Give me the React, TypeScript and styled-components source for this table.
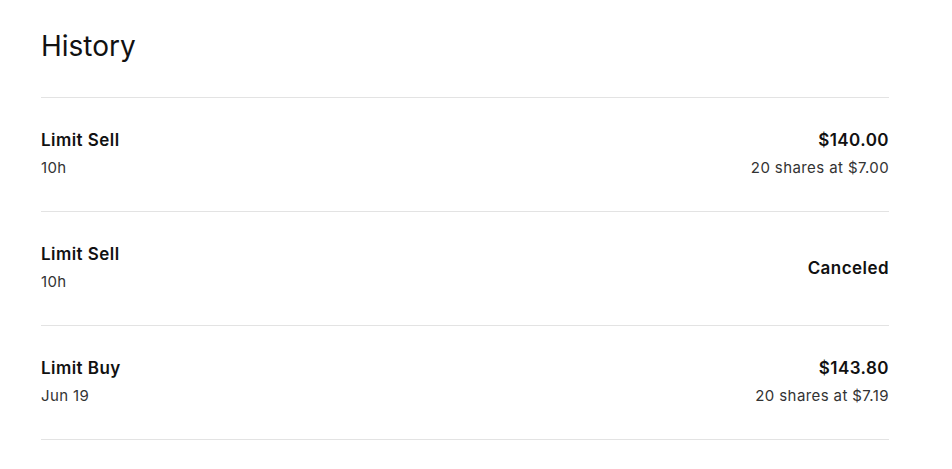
import React from "react";
import styled, { createGlobalStyle } from "styled-components";

interface Order {
    kind: string;
    when: string;
    amount: string;
    detail?: string;
}

const orders: Order[] = [
    { kind: "Limit Sell", when: "10h", amount: "$140.00", detail: "20 shares at $7.00" },
    { kind: "Limit Sell", when: "10h", amount: "Canceled" },
    { kind: "Limit Buy", when: "Jun 19", amount: "$143.80", detail: "20 shares at $7.19" },
];

const App = () => {
    return (
        <>
            <GlobalStyle />
            <StyledPage>
                <StyledTitle>History</StyledTitle>
                <StyledList>
                    {orders.map((order, i) => (
                        <StyledRow key={i}>
                            <StyledSide>
                                <StyledPrimary>{order.kind}</StyledPrimary>
                                <StyledSecondary>{order.when}</StyledSecondary>
                            </StyledSide>
                            <StyledSide $right>
                                <StyledPrimary>{order.amount}</StyledPrimary>
                                {order.detail && <StyledSecondary>{order.detail}</StyledSecondary>}
                            </StyledSide>
                        </StyledRow>
                    ))}
                </StyledList>
            </StyledPage>
        </>
    );
};

const GlobalStyle = createGlobalStyle`
    body {
        margin: 0;
        background: #ffffff;
        font-family: Inter, "Noto Sans", sans-serif;
        color: #111111;
    }
`;

const StyledPage = styled.div`
    width: 848px;
    padding: 24px 0 0 41px;
`;

const StyledTitle = styled.h1`
    margin: 0;
    height: 73px;
    font-size: 28px;
    font-weight: 400;
    line-height: 44px;
    color: #111111;
`;

const StyledList = styled.div`
    border-top: 1px solid #e3e3e3;
`;

const StyledRow = styled.div`
    display: flex;
    justify-content: space-between;
    align-items: center;
    box-sizing: border-box;
    height: 114px;
    padding-bottom: 2px;
    border-bottom: 1px solid #e3e3e3;
`;

const StyledSide = styled.div<{ $right?: boolean }>`
    display: flex;
    flex-direction: column;
    gap: 4px;
    align-items: ${(p) => (p.$right ? "flex-end" : "flex-start")};
`;

const StyledPrimary = styled.div`
    font-size: 17px;
    font-weight: 600;
    line-height: 24px;
    letter-spacing: 0.45px;
    color: #111111;
`;

const StyledSecondary = styled.div`
    font-size: 15px;
    font-weight: 400;
    line-height: 24px;
    letter-spacing: 0.4px;
    color: #333333;
`;

export default App;
